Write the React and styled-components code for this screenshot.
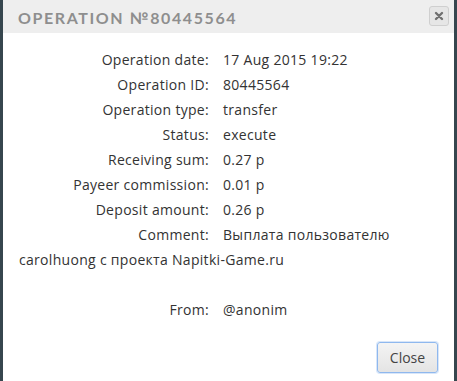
import React from "react";
import styled, { createGlobalStyle } from "styled-components";

const Global = createGlobalStyle`
  html, body { margin: 0; padding: 0; background: #36464e; }
  #root { height: 381px; }
`;

const Frame = styled.div`
  height: 381px;
  padding: 0 3px;
  box-sizing: border-box;
  display: flex;
  overflow: hidden;
`;

const Dialog = styled.div`
  flex: 1;
  background: #fff;
  display: flex;
  flex-direction: column;
  font-family: "Open Sans", "Liberation Sans", sans-serif;
`;

const Header = styled.div`
  height: 33px;
  background: #eeeeee;
  display: flex;
  align-items: center;
  justify-content: space-between;
  padding: 0 5px 0 15px;
`;

const Title = styled.div`
  font-family: "Lato", "Open Sans", sans-serif;
  font-weight: 700;
  font-size: 16px;
  letter-spacing: 1.6px;
  color: #8e8e8e;
  text-transform: uppercase;
  margin-top: 1px;
`;

const XButton = styled.button`
  width: 20px;
  height: 20px;
  padding: 0;
  border: 1px solid #cfcfcf;
  border-radius: 3px;
  background: #e6e6e6;
  display: flex;
  align-items: center;
  justify-content: center;
  margin-top: -1px;
`;

const Body = styled.div`
  padding: 14px 16px 0 16px;
  font-size: 14px;
  line-height: 25px;
  letter-spacing: 0.3px;
  color: #333;
  flex: 1;
`;

const Row = styled.div`
  margin-top: ${(p) => (p.$gap ? "25px" : "0")};
`;

const Label = styled.span`
  display: inline-block;
  width: 190px;
  text-align: right;
  margin-right: 14px;
`;

const Footer = styled.div`
  display: flex;
  justify-content: flex-end;
  padding: 0 16px 8px;
`;

const CloseButton = styled.button`
  width: 61px;
  height: 31px;
  border: 1px solid #8fb8ee;
  border-radius: 3px;
  background: linear-gradient(#f4f4f4, #e4e4e4);
  box-shadow: 0 0 0 1px rgba(143, 184, 238, 0.35);
  font-family: "Open Sans", "Liberation Sans", sans-serif;
  font-size: 14px;
  color: #444;
  padding: 0;
`;

const rows = [
  ["Operation date:", "17 Aug 2015 19:22"],
  ["Operation ID:", "80445564"],
  ["Operation type:", "transfer"],
  ["Status:", "execute"],
  ["Receiving sum:", "0.27 р"],
  ["Payeer commission:", "0.01 р"],
  ["Deposit amount:", "0.26 р"],
  ["Comment:", "Выплата пользователю carolhuong с проекта Napitki-Game.ru"],
];

export default function App() {
  return (
    <>
      <Global />
      <Frame>
        <Dialog>
          <Header>
            <Title>Operation №80445564</Title>
            <XButton aria-label="close">
              <svg width="10" height="10" viewBox="0 0 10 10">
                <path d="M2 2 L8 8 M8 2 L2 8" stroke="#707070" strokeWidth="2.4" strokeLinecap="round" />
              </svg>
            </XButton>
          </Header>
          <Body>
            {rows.map(([l, v]) => (
              <Row key={l}>
                <Label>{l}</Label>
                {v}
              </Row>
            ))}
            <Row $gap>
              <Label>From:</Label>@anonim
            </Row>
          </Body>
          <Footer>
            <CloseButton>Close</CloseButton>
          </Footer>
        </Dialog>
      </Frame>
    </>
  );
}
